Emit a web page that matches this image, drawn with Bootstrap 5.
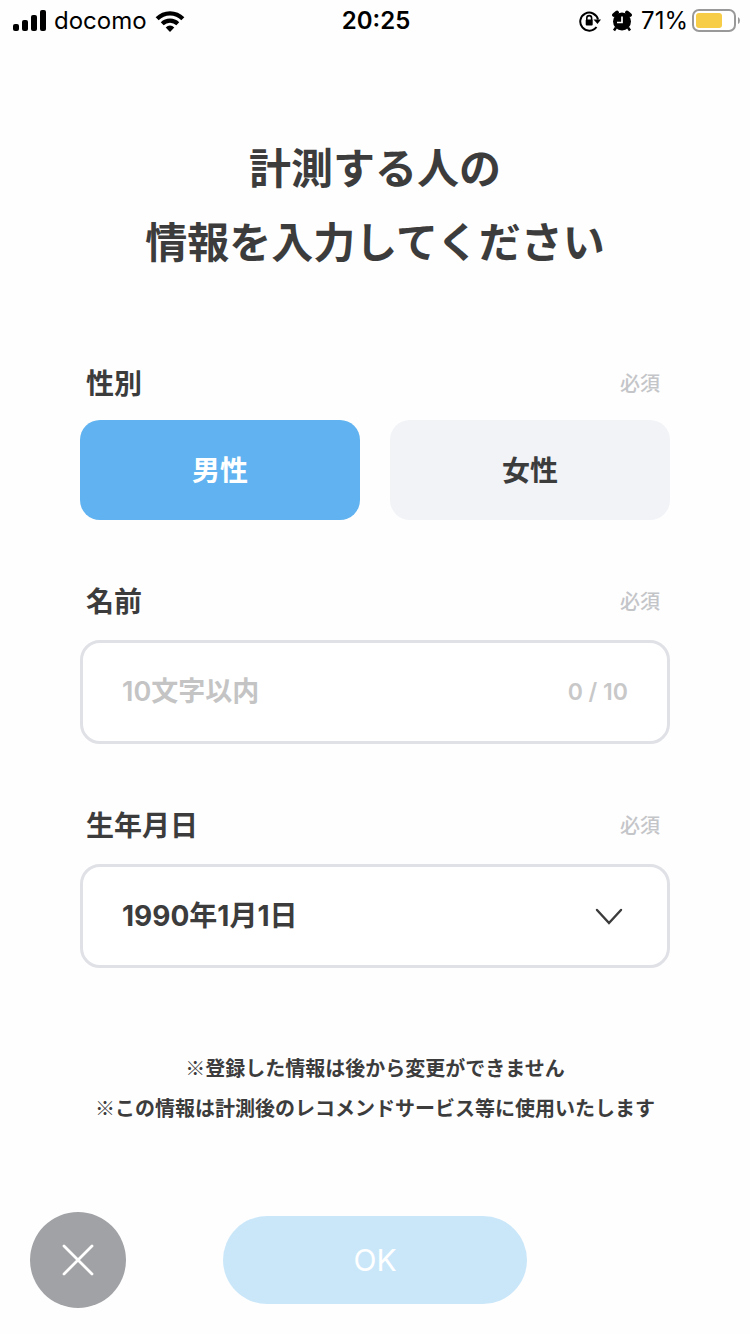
<!DOCTYPE html>
<html lang="ja">
<head>
<meta charset="utf-8">
<meta name="viewport" content="width=device-width, initial-scale=1">
<title>計測する人の情報</title>
<link href="https://cdn.jsdelivr.net/npm/bootstrap@5.3.0/dist/css/bootstrap.min.css" rel="stylesheet">
<style>
  body { font-family: Inter, "Noto Sans CJK JP", sans-serif; color: #3c3c3d; background: #fefefe; }
  .status-bar { height: 42px; padding: 0 10px 0 12px; font-size: 24px; line-height: 42px; color: #000; display: grid; grid-template-columns: 1fr auto 1fr; }
  .status-bar svg { flex: none; }
  .page-title { font-size: 42px; line-height: 74px; font-weight: 700; margin: 90px 0 82px; }
  .form-area { padding: 0 80px; }
  .field { margin-bottom: 60px; }
  .field-head { height: 44px; margin-bottom: 16px; padding: 0 10px 0 6px; }
  .gender-field .field-head { margin-bottom: 14px; }
  .field-name { font-size: 28px; line-height: 44px; font-weight: 700; }
  .required { font-size: 20px; line-height: 44px; font-weight: 500; color: #c4c5c8; }
  .choices { gap: 30px; }
  .choices .btn { height: 100px; line-height: 103px; padding: 0; border: 0; border-radius: 20px; font-size: 28px; font-weight: 700; color: #3c3c3d; background: #f1f3f7; }
  .choices .btn-check:checked + .btn { color: #fff; background: #60b3f0; }
  .field-box { height: 104px; border: 3px solid #e0e1e6; border-radius: 20px; background-color: #fff; }
  .name-box { padding: 0 39px; }
  .name-box input { font-size: 27px; font-weight: 600; padding: 0; border: 0; background: none; box-shadow: none; min-width: 0; }
  .name-box input::placeholder { color: #c4c4c5; opacity: 1; }
  .name-box output { font-size: 23px; font-weight: 600; color: #c8c8c9; white-space: nowrap; }
  .date-select { font-size: 28px; font-weight: 700; color: #3c3c3d; padding: 0 90px 0 39px; background-position: right 44px center; background-size: 28px 18px;
    background-image: url("data:image/svg+xml,%3Csvg xmlns='http://www.w3.org/2000/svg' viewBox='0 0 28 18'%3E%3Cpath d='M2 3l12 13L26 3' fill='none' stroke='%233c3c3d' stroke-width='2.4' stroke-linecap='round'/%3E%3C/svg%3E"); }
  .notes { font-family: "Noto Sans CJK JP", sans-serif; font-size: 20px; line-height: 40px; font-weight: 700; margin: 80px 0 84px; }
  .actions { display: grid; grid-template-columns: 1fr auto 1fr; padding: 0 30px 26px; }
  .close-btn { width: 96px; height: 96px; background: #a1a2a6; }
  .ok-btn, .ok-btn:disabled { width: 304px; height: 88px; border: 0; font-size: 30px; font-weight: 400; color: #fff; background: #cae7fa; opacity: 1; }
</style>
</head>
<body>
<header class="status-bar">
  <div class="d-flex align-items-center">
    <svg width="34" height="22" viewBox="0 0 34 22" aria-hidden="true"><rect x="1" y="14" width="6" height="7" rx="2"/><rect x="10" y="10" width="6" height="11" rx="2"/><rect x="19" y="5" width="6" height="16" rx="2"/><rect x="28" y="0" width="6" height="21" rx="2"/></svg>
    <span class="ms-2">docomo</span>
    <svg class="ms-2" width="30" height="22" viewBox="0 0 32 24" aria-hidden="true"><g fill="none" stroke="#000" stroke-width="4.6"><path d="M2 9.500a19.500 19.500 0 0 1 28 0"/><path d="M7.500 15a12.300 12.300 0 0 1 17 0"/></g><path d="M11.300 19a6.600 6.600 0 0 1 9.400 0L16 24z"/></svg>
  </div>
  <div class="fw-semibold">20:25</div>
  <div class="d-flex align-items-center justify-content-end">
    <svg class="me-2" width="24" height="22" viewBox="0 0 24 22" aria-hidden="true"><g fill="none" stroke="#000" stroke-width="2"><path d="M17.500 17A9 9 0 1 1 19 9.500"/><path d="M7.800 10V8a2.400 2.400 0 0 1 4.800 0v2" stroke-width="1.600"/></g><rect x="6.700" y="9.500" width="7" height="6" rx="1"/><path d="M14.500 9.500h7.500L18.500 14z"/></svg>
    <svg class="me-2" width="22" height="22" viewBox="0 0 22 22" aria-hidden="true"><circle cx="11" cy="11.500" r="9"/><path d="M3 5L6 2.500M19 5L16 2.500" stroke="#000" stroke-width="3.800" stroke-linecap="round"/><path d="M5 17.500l-2 3M17 17.500l2 3" stroke="#000" stroke-width="2.500"/><path d="M11 6.500v6H6" fill="none" stroke="#fff" stroke-width="1.700"/></svg>
    <span>71%</span>
    <svg class="ms-1" width="48" height="24" viewBox="0 0 48 24" aria-hidden="true"><rect x="1" y="1" width="42" height="21" rx="6" fill="#fff" stroke="#999" stroke-width="2"/><rect x="4" y="4" width="26" height="15" rx="3" fill="#f7cc46"/><path d="M46 8q2 1 2 3.500t-2 3.500z" fill="#999"/></svg>
  </div>
</header>

<main>
  <h1 class="page-title text-center">計測する人の<br>情報を入力してください</h1>
  <form>
    <div class="form-area">
      <div class="field gender-field" role="radiogroup" aria-labelledby="gender-label">
        <div class="field-head d-flex justify-content-between">
          <span class="field-name" id="gender-label">性別</span><span class="required">必須</span>
        </div>
        <div class="choices d-flex">
          <input type="radio" class="btn-check" name="gender" id="male" checked>
          <label class="btn flex-fill w-50" for="male">男性</label>
          <input type="radio" class="btn-check" name="gender" id="female">
          <label class="btn flex-fill w-50" for="female">女性</label>
        </div>
      </div>
      <div class="field">
        <div class="field-head d-flex justify-content-between">
          <label class="field-name" for="person-name">名前</label><span class="required">必須</span>
        </div>
        <div class="field-box name-box d-flex align-items-center">
          <input type="text" class="form-control flex-fill" id="person-name" maxlength="10" placeholder="10文字以内">
          <output for="person-name">0 / 10</output>
        </div>
      </div>
      <div class="field">
        <div class="field-head d-flex justify-content-between">
          <label class="field-name" for="birthday">生年月日</label><span class="required">必須</span>
        </div>
        <select class="form-select field-box date-select" id="birthday"><option>1990年1月1日</option></select>
      </div>
    </div>
    <p class="notes text-center">※登録した情報は後から変更ができません<br>※この情報は計測後のレコメンドサービス等に使用いたします</p>
    <div class="actions align-items-center">
      <button type="button" class="btn close-btn rounded-circle p-0 border-0 d-flex align-items-center justify-content-center" aria-label="閉じる">
        <svg width="32" height="32" viewBox="0 0 32 32" aria-hidden="true"><path d="M2 2l28 28M30 2L2 30" stroke="#fff" stroke-width="2.800" stroke-linecap="round"/></svg>
      </button>
      <button type="submit" class="btn ok-btn rounded-pill" disabled>OK</button>
    </div>
  </form>
</main>
<script src="https://cdn.jsdelivr.net/npm/bootstrap@5.3.0/dist/js/bootstrap.bundle.min.js"></script>
</body>
</html>
